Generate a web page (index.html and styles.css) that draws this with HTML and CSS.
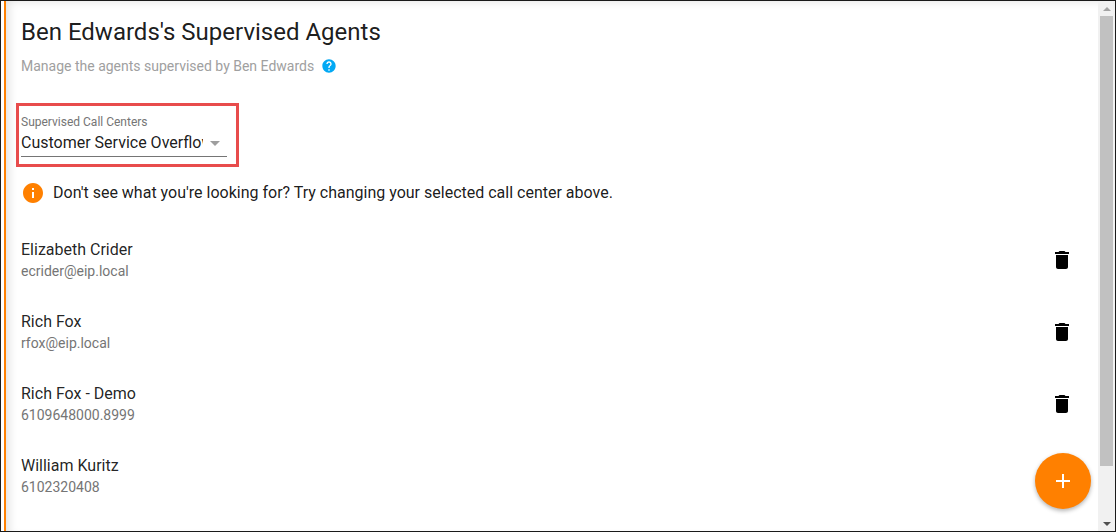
FILE: index.html
```html
<!DOCTYPE html>
<html lang="en">
<head>
    <meta charset="UTF-8">
    <meta name="viewport" content="width=device-width, initial-scale=1.0">
    <title>Supervised Agents</title>
    <link rel="stylesheet" href="styles.css">
</head>
<body>
    <div class="frame">
        <div class="accent"></div>
        <main class="content">
            <h1 class="title">Ben Edwards's Supervised Agents</h1>
            <div class="subtitle">
                <span>Manage the agents supervised by Ben Edwards</span>
                <svg class="help-icon" viewBox="0 0 24 24"><path fill="#03a9f4" d="M12 2C6.48 2 2 6.48 2 12s4.48 10 10 10 10-4.48 10-10S17.52 2 12 2zm1 17h-2v-2h2v2zm2.07-7.75l-.9.92C13.45 12.9 13 13.5 13 15h-2v-.5c0-1.1.45-2.1 1.17-2.83l1.24-1.26c.37-.36.59-.86.59-1.41 0-1.1-.9-2-2-2s-2 .9-2 2H8c0-2.21 1.79-4 4-4s4 1.79 4 4c0 .88-.36 1.68-.93 2.25z"/></svg>
            </div>

            <div class="highlight">
                <div class="select-field">
                    <label class="select-label">Supervised Call Centers</label>
                    <div class="select-row">
                        <span class="select-value">Customer Service Overflow</span>
                        <span class="select-arrow"></span>
                    </div>
                </div>
            </div>

            <div class="notice">
                <svg class="info-icon" viewBox="0 0 24 24"><path fill="#ff8000" d="M12 2C6.48 2 2 6.48 2 12s4.48 10 10 10 10-4.48 10-10S17.52 2 12 2zm1 15h-2v-6h2v6zm0-8h-2V7h2v2z"/></svg>
                <span>Don't see what you're looking for? Try changing your selected call center above.</span>
            </div>

            <ul class="agent-list">
                <li class="agent">
                    <div class="agent-text">
                        <div class="agent-name">Elizabeth Crider</div>
                        <div class="agent-sub">ecrider@eip.local</div>
                    </div>
                    <svg class="trash" viewBox="0 0 24 24"><path d="M6 19c0 1.1.9 2 2 2h8c1.1 0 2-.9 2-2V7H6v12zM19 4h-3.5l-1-1h-5l-1 1H5v2h14V4z"/></svg>
                </li>
                <li class="agent">
                    <div class="agent-text">
                        <div class="agent-name">Rich Fox</div>
                        <div class="agent-sub">rfox@eip.local</div>
                    </div>
                    <svg class="trash" viewBox="0 0 24 24"><path d="M6 19c0 1.1.9 2 2 2h8c1.1 0 2-.9 2-2V7H6v12zM19 4h-3.5l-1-1h-5l-1 1H5v2h14V4z"/></svg>
                </li>
                <li class="agent">
                    <div class="agent-text">
                        <div class="agent-name">Rich Fox - Demo</div>
                        <div class="agent-sub">6109648000.8999</div>
                    </div>
                    <svg class="trash" viewBox="0 0 24 24"><path d="M6 19c0 1.1.9 2 2 2h8c1.1 0 2-.9 2-2V7H6v12zM19 4h-3.5l-1-1h-5l-1 1H5v2h14V4z"/></svg>
                </li>
                <li class="agent">
                    <div class="agent-text">
                        <div class="agent-name">William Kuritz</div>
                        <div class="agent-sub">6102320408</div>
                    </div>
                </li>
            </ul>
        </main>

        <div class="scrollbar">
            <div class="scroll-btn"><span class="scroll-up"></span></div>
            <div class="scroll-track"><div class="scroll-thumb"></div></div>
            <div class="scroll-btn"><span class="scroll-down"></span></div>
        </div>

        <button class="fab" type="button">
            <svg viewBox="0 0 24 24"><path fill="#fff" d="M19 13h-6v6h-2v-6H5v-2h6V5h2v6h6v2z"/></svg>
        </button>
    </div>
</body>
</html>
```

FILE: styles.css
```css
/* page frame */
html, body {
    margin: 0;
    padding: 0;
    height: 100%;
    overflow: hidden;
}
body {
    font-family: Roboto, Arial, sans-serif;
    background-color: #fff;
    color: #000;
}
.frame {
    position: relative;
    box-sizing: border-box;
    height: 532px;
    display: flex;
    border: 1px solid #1a1a1a;
    background-color: #fff;
}
.accent {
    width: 2px;
    margin-left: 3px;
    background-color: #ff8000;
}
.content {
    flex: 1;
    min-width: 0;
    padding: 15px 0 0 15px;
    box-shadow: inset 6px 3px 10px -3px rgba(0, 0, 0, 0.12);
}
.title {
    margin: 0;
    font-size: 24px;
    font-weight: 400;
    line-height: 32px;
    color: rgba(0, 0, 0, 0.9);
}
.subtitle {
    display: flex;
    align-items: center;
    margin-top: 8px;
    font-size: 14px;
    line-height: 20px;
    color: #a0a0a0;
}
.help-icon {
    width: 16px;
    height: 16px;
    margin-left: 7px;
}

/* red box round the select */
.highlight {
    box-sizing: border-box;
    width: 223px;
    height: 64px;
    margin: 27px 0 0 -5px;
    padding: 9px 0 0 2px;
    border: 3px solid #e84c4c;
}
.select-field {
    width: 206px;
}
.select-label {
    display: block;
    margin-bottom: 1px;
    font-size: 12px;
    line-height: 14px;
    color: #757575;
}
.select-row {
    display: flex;
    align-items: center;
    height: 26px;
    border-bottom: 1px solid #757575;
}
.select-value {
    width: 182px;
    overflow: hidden;
    white-space: nowrap;
    font-size: 16px;
    line-height: 24px;
    color: rgba(0, 0, 0, 0.9);
}
.select-arrow {
    width: 0;
    height: 0;
    margin-left: 7px;
    border-left: 5px solid transparent;
    border-right: 5px solid transparent;
    border-top: 5px solid #9e9e9e;
}

.notice {
    display: flex;
    align-items: center;
    margin-top: 14px;
    font-size: 16px;
    line-height: 24px;
    color: rgba(0, 0, 0, 0.9);
}
.info-icon {
    width: 24px;
    height: 24px;
    margin-right: 8px;
}

/* agents */
.agent-list {
    list-style: none;
    margin: 19px 0 0 0;
    padding: 0 24px 0 0;
}
.agent {
    display: flex;
    align-items: center;
    justify-content: space-between;
    height: 72px;
}
.agent-text {
    padding-bottom: 2px;
}
.agent-name {
    font-size: 16px;
    line-height: 23px;
    color: rgba(0, 0, 0, 0.87);
}
.agent-sub {
    font-size: 14px;
    line-height: 20px;
    color: #757575;
}
.trash {
    width: 24px;
    height: 24px;
    fill: #000;
}

/* scrollbar */
.scrollbar {
    width: 17px;
    display: flex;
    flex-direction: column;
    background-color: #f1f1f1;
}
.scroll-btn {
    height: 15px;
    display: flex;
    align-items: center;
    justify-content: center;
}
.scroll-up {
    border-left: 4px solid transparent;
    border-right: 4px solid transparent;
    border-bottom: 4px solid #a3a3a3;
}
.scroll-down {
    border-left: 4px solid transparent;
    border-right: 4px solid transparent;
    border-top: 4px solid #505050;
}
.scroll-track {
    flex: 1;
    padding: 0 2px;
}
.scroll-thumb {
    height: 450px;
    background-color: #c1c1c1;
}

/* add button */
.fab {
    position: absolute;
    right: 24px;
    bottom: 22px;
    width: 56px;
    height: 56px;
    padding: 16px;
    border: none;
    border-radius: 50%;
    background-color: #ff8000;
    box-shadow: 0 2px 4px rgba(0, 0, 0, 0.3);
}
.fab svg {
    display: block;
    width: 24px;
    height: 24px;
}
```
